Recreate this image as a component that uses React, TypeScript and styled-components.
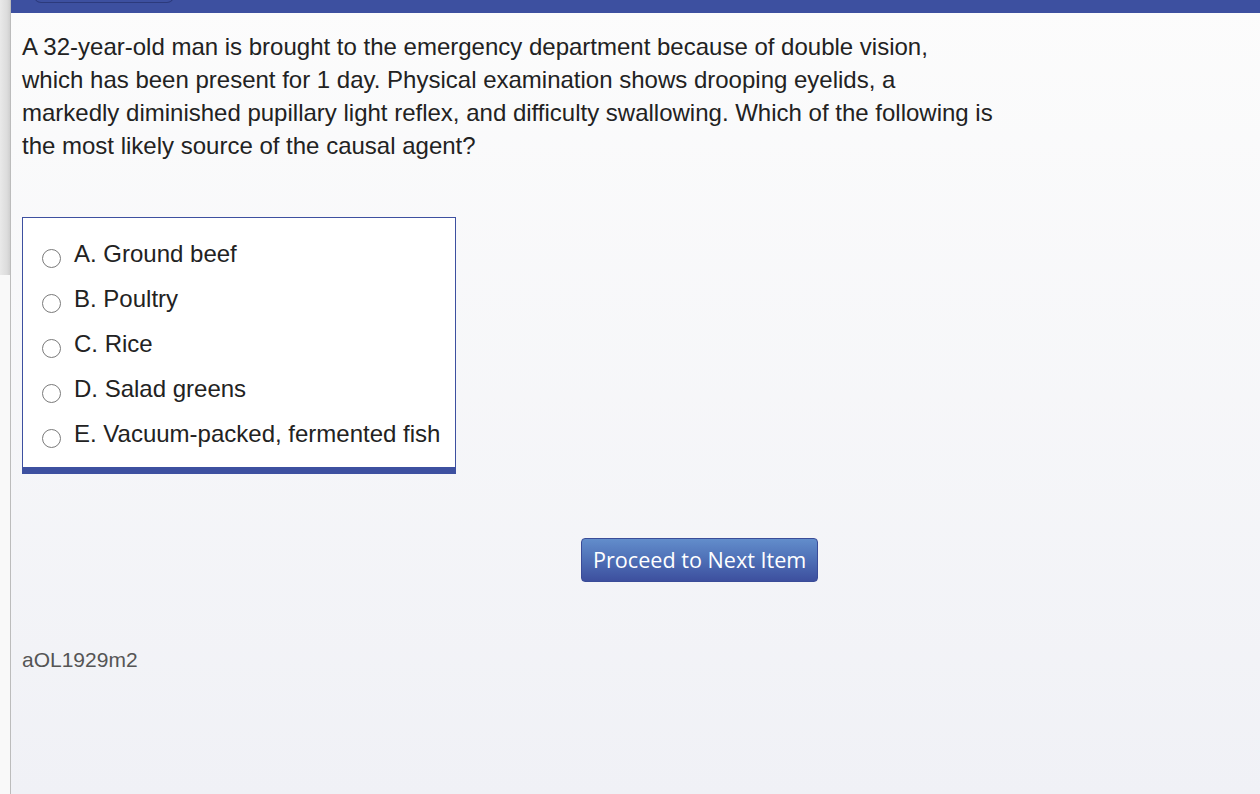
import React from 'react';
import styled, { createGlobalStyle } from 'styled-components';

const GlobalStyle = createGlobalStyle`
  html, body {
    margin: 0;
    padding: 0;
    height: 100%;
    overflow: hidden;
  }
  #root {
    height: 100%;
  }
`;

const Page = styled.div`
  display: flex;
  width: 1260px;
  height: 794px;
  font-family: 'Liberation Sans', Arial, sans-serif;
`;

const LeftRail = styled.div`
  width: 10px;
  flex-shrink: 0;
  background: #f9f9f9;
  border-right: 1px solid #bcbcbc;
`;

const RailThumb = styled.div`
  height: 275px;
  background: linear-gradient(to right, #e9e9e9 0%, #dcdcdc 70%, #cfcfcf 100%);
`;

const Main = styled.div`
  flex: 1;
  display: flex;
  flex-direction: column;
  background: linear-gradient(to bottom, #fcfcfc 0%, #f0f1f6 100%);
  overflow: hidden;
`;

const TopBar = styled.div`
  height: 13px;
  flex-shrink: 0;
  background: #3d50a0;
  padding-left: 23px;
  overflow: hidden;
`;

const BlockTab = styled.div`
  width: 140px;
  height: 24px;
  margin-top: -21px;
  box-sizing: border-box;
  border: 1px solid #2c3a7c;
  border-top: none;
  border-radius: 0 0 7px 7px;
  background: #3d50a0;
  color: #ffffff;
  font-size: 16px;
  line-height: 20px;
  text-align: center;
`;

const Content = styled.div`
  display: flex;
  flex-direction: column;
  align-items: flex-start;
  padding: 17px 0 0 11px;
`;

const Question = styled.p`
  margin: 0;
  font-size: 24px;
  line-height: 33px;
  color: #222222;
  white-space: nowrap;
`;

const AnswerBox = styled.div`
  margin-top: 55px;
  width: 434px;
  box-sizing: border-box;
  background: #ffffff;
  border: 1px solid #3d50a0;
  border-bottom-width: 7px;
  padding: 13px 0 11px 19px;
`;

const OptionRow = styled.label`
  display: flex;
  align-items: center;
  height: 45px;
  gap: 13px;
  font-size: 24px;
  color: #222222;
  cursor: pointer;
  white-space: nowrap;
`;

const Radio = styled.span`
  width: 17px;
  height: 17px;
  flex-shrink: 0;
  margin-top: 10px;
  border: 1px solid #7a7a7a;
  border-radius: 50%;
  background: #ffffff;
`;

const NextButton = styled.button`
  margin: 64px 0 0 559px;
  height: 44px;
  padding: 0 11px;
  border: 1px solid #3a4c98;
  border-radius: 4px;
  background: linear-gradient(to bottom, #628dcb 0%, #4e6fb6 50%, #3d4f9e 100%);
  color: #ffffff;
  font-family: 'Open Sans', sans-serif;
  font-size: 21.6px;
  line-height: 40px;
  cursor: pointer;
`;

const ItemId = styled.div`
  margin-top: 66px;
  font-size: 21px;
  line-height: 24px;
  color: #555555;
`;

const options = [
  'A. Ground beef',
  'B. Poultry',
  'C. Rice',
  'D. Salad greens',
  'E. Vacuum-packed, fermented fish',
];

const App: React.FC = () => {
  return (
    <>
      <GlobalStyle />
      <Page>
        <LeftRail>
          <RailThumb />
        </LeftRail>
        <Main>
          <TopBar>
            <BlockTab>Block: 1 of 1</BlockTab>
          </TopBar>
          <Content>
            <Question>
              A 32-year-old man is brought to the emergency department because of double vision,
              <br />
              which has been present for 1 day. Physical examination shows drooping eyelids, a
              <br />
              markedly diminished pupillary light reflex, and difficulty swallowing. Which of the following is
              <br />
              the most likely source of the causal agent?
            </Question>
            <AnswerBox>
              {options.map(opt => (
                <OptionRow key={opt}>
                  <Radio />
                  <span>{opt}</span>
                </OptionRow>
              ))}
            </AnswerBox>
            <NextButton>Proceed to Next Item</NextButton>
            <ItemId>aOL1929m2</ItemId>
          </Content>
        </Main>
      </Page>
    </>
  );
};

export default App;
